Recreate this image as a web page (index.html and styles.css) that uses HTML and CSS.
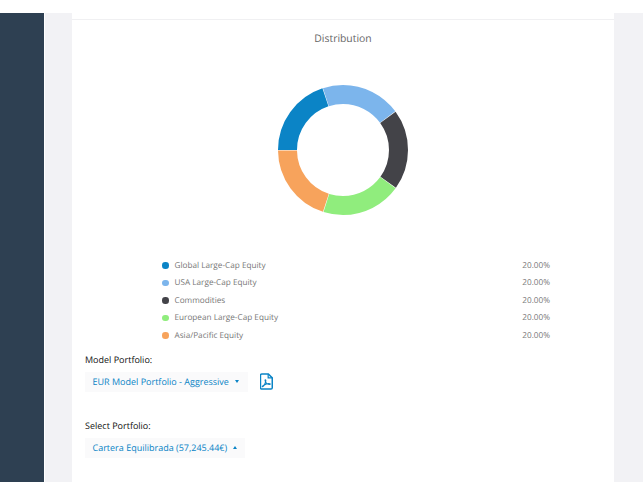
FILE: index.html
```html
<!DOCTYPE html>
<html lang="en">
<head>
<meta charset="utf-8">
<title>Distribution</title>
<link rel="stylesheet" href="styles.css">
</head>
<body>
<div class="top-strip"></div>
<div class="layout">
  <aside class="sidebar"></aside>
  <div class="gutter"></div>
  <main class="card">
    <div class="card-rule"></div>
    <h2 class="title">Distribution</h2>
    <div class="chart">
      <svg class="donut" width="132" height="132" viewBox="0 0 132 132">
        <g fill="none" stroke-width="19" transform="rotate(180 66 66)">
          <circle class="s1" cx="66" cy="66" r="55.5" pathLength="360" stroke-dasharray="71.5 288.5" stroke-dashoffset="0"/>
          <circle class="s2" cx="66" cy="66" r="55.5" pathLength="360" stroke-dasharray="71.5 288.5" stroke-dashoffset="-72"/>
          <circle class="s3" cx="66" cy="66" r="55.5" pathLength="360" stroke-dasharray="71.5 288.5" stroke-dashoffset="-144"/>
          <circle class="s4" cx="66" cy="66" r="55.5" pathLength="360" stroke-dasharray="71.5 288.5" stroke-dashoffset="-216"/>
          <circle class="s5" cx="66" cy="66" r="55.5" pathLength="360" stroke-dasharray="71.5 288.5" stroke-dashoffset="-288"/>
        </g>
      </svg>
    </div>
    <ul class="legend">
      <li class="legend-row"><span class="dot d1"></span><span class="name">Global Large-Cap Equity</span><span class="pct">20.00%</span></li>
      <li class="legend-row"><span class="dot d2"></span><span class="name">USA Large-Cap Equity</span><span class="pct">20.00%</span></li>
      <li class="legend-row"><span class="dot d3"></span><span class="name">Commodities</span><span class="pct">20.00%</span></li>
      <li class="legend-row"><span class="dot d4"></span><span class="name">European Large-Cap Equity</span><span class="pct">20.00%</span></li>
      <li class="legend-row"><span class="dot d5"></span><span class="name">Asia/Pacific Equity</span><span class="pct">20.00%</span></li>
    </ul>
    <section class="field field-model">
      <div class="label">Model Portfolio:</div>
      <div class="control">
        <div class="select select-model">EUR Model Portfolio - Aggressive<span class="caret"></span></div>
        <svg class="pdf" width="13" height="17" viewBox="0 0 14 18">
          <path d="M1.9 .9H9l4.200 4.200v10.600a1.400 1.400 0 0 1-1.400 1.400H1.900a1.400 1.400 0 0 1-1.400-1.400V2.300A1.400 1.400 0 0 1 1.900 .9Z" fill="none" stroke="#0a84c6" stroke-width="1.600"/>
          <path d="M8.800 .9V5.200H13.200" fill="none" stroke="#0a84c6" stroke-width="1.300"/>
          <path d="M2.600 14.600c1.800-.9 3-3.200 3.600-5.800.2-1 .1-1.800-.4-1.800s-.5 1 0 2.100c.7 1.700 2.200 3 4.600 3.200.8 0 1-.7.2-.9-1.700-.4-4.300.3-6.400 1.600-1.200.8-2.100 1.300-1.600 1.600Z" fill="none" stroke="#0a84c6" stroke-width="1.100"/>
        </svg>
      </div>
    </section>
    <section class="field field-select">
      <div class="label">Select Portfolio:</div>
      <div class="control">
        <div class="select select-portfolio">Cartera Equilibrada (57,245.44€)<span class="caret caret-up"></span></div>
      </div>
    </section>
  </main>
  <div class="gutter-right"></div>
</div>
</body>
</html>
```
FILE: styles.css
```css
* { box-sizing: border-box; }
html, body { margin: 0; padding: 0; }
body {
  width: 643px;
  height: 482px;
  overflow: hidden;
  background: #fff;
  font-family: "Open Sans", "Liberation Sans", sans-serif;
  text-rendering: geometricPrecision;
}
.top-strip { height: 13px; background: #fff; }
.layout { display: flex; height: 469px; }
.sidebar { width: 44px; background: #2e4052; }
.gutter { width: 28px; background: #f2f2f5; border-left: 1px solid #fff; }
.gutter-right { flex: 1; background: #f2f2f5; }
.card { width: 542px; background: #fff; padding: 0 0 0 13px; }
.card-rule { height: 1px; margin: 6px 0 0 -13px; background: #f0f0f2; }
.title {
  margin: 11px 0 0 -13px;
  text-align: center;
  font-size: 10.4px;
  line-height: 16px;
  font-weight: 500;
  color: #666;
}
.chart { display: flex; justify-content: center; margin: 37px 0 0 -13px; height: 132px; }
.legend { list-style: none; margin: 40.5px 0 0 77px; padding: 0; width: 388px; }
.legend-row {
  display: flex;
  align-items: center;
  height: 17.5px;
  font-size: 8.2px;
  color: #777;
}
.dot { width: 6.5px; height: 6.5px; border-radius: 50%; margin-right: 6px; }
.name { flex: 1; }
.s1 { stroke: #0b84c6; }
.s2 { stroke: #7cb5ec; }
.s3 { stroke: #434348; }
.s4 { stroke: #90ed7d; }
.s5 { stroke: #f7a35c; }
.d1 { background: #0b84c6; }
.d2 { background: #7cb5ec; }
.d3 { background: #434348; }
.d4 { background: #90ed7d; }
.d5 { background: #f7a35c; }
.field-model { margin-top: 9px; }
.field-select { margin-top: 27px; }
.label { font-size: 9px; line-height: 14px; font-weight: 500; color: #111; }
.control { display: flex; align-items: center; margin-top: 5px; }
.select {
  display: flex;
  align-items: center;
  height: 20px;
  padding: 0 0 1.5px 7.5px;
  background: #fafafb;
  font-size: 9px;
  font-weight: 500;
  color: #0a84c6;
}
.select-model { width: 163px; }
.select-portfolio { width: 160px; }
.caret {
  width: 0;
  height: 0;
  margin-left: 6px;
  border-left: 2.5px solid transparent;
  border-right: 2.5px solid transparent;
  border-top: 3px solid #0a84c6;
}
.caret-up { border-top: 0; border-bottom: 3px solid #0a84c6; }
.pdf { margin: 0 0 2px 12px; }
```
